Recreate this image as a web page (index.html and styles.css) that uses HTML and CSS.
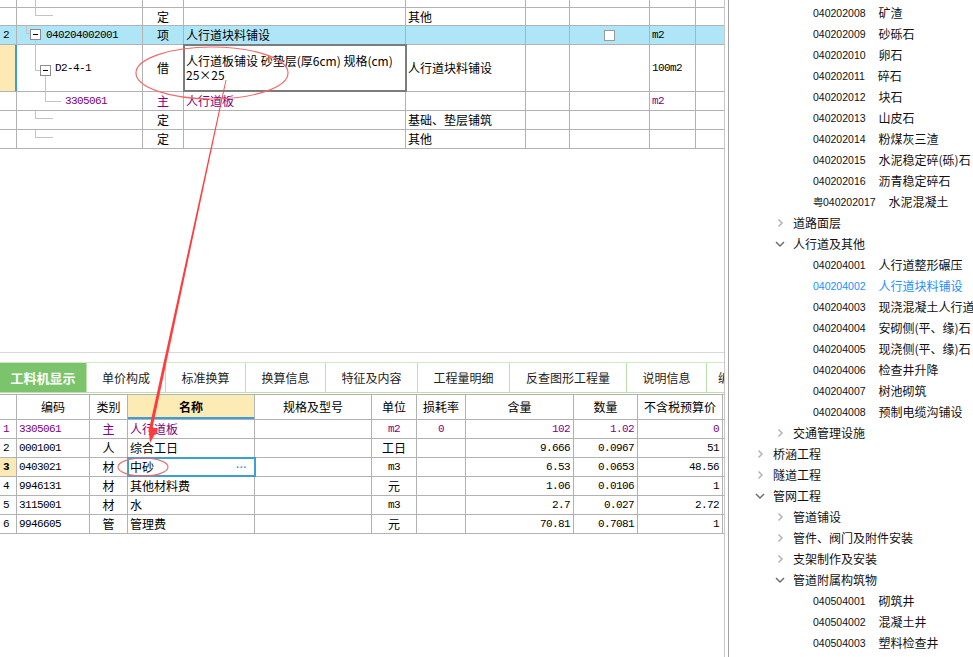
FILE: index.html
```html
<!DOCTYPE html>
<html lang="zh-CN">
<head>
<meta charset="utf-8">
<title>工料机显示</title>
<link rel="stylesheet" href="styles.css">
</head>
<body>
<div class="app">
  <div class="left">
    <div class="grid-top">
      <div class="row h8">
        <div class="c"></div>
        <div class="c code"><i class="ln ln-top"></i></div>
        <div class="c"></div><div class="c"></div><div class="c"></div><div class="c"></div><div class="c"></div><div class="c"></div><div class="c"></div>
      </div>
      <div class="row h18">
        <div class="c"></div>
        <div class="c code"><i class="ln ln-def"></i></div>
        <div class="c ctr">定</div>
        <div class="c"></div>
        <div class="c tx">其他</div>
        <div class="c"></div><div class="c"></div><div class="c"></div><div class="c"></div>
      </div>
      <div class="row h19 blue">
        <div class="c num"><span class="m">2</span></div>
        <div class="c code pl29"><i class="ln ln-root"></i><i class="box box-root"></i><i class="ln ln-root-down"></i><span class="m">040204002001</span></div>
        <div class="c ctr">项</div>
        <div class="c tx">人行道块料铺设</div>
        <div class="c"></div>
        <div class="c"></div>
        <div class="c ctr"><span class="chk"></span></div>
        <div class="c tx"><span class="m">m2</span></div>
        <div class="c"></div>
      </div>
      <div class="row h47">
        <div class="c cur"></div>
        <div class="c code pl38"><i class="ln ln-d2"></i><i class="box box-d2"></i><i class="ln ln-d2-down"></i><span class="m">D2-4-1</span></div>
        <div class="c ctr">借</div>
        <div class="c tx sel">人行道板铺设 砂垫层(厚6cm) 规格(cm)<br>25×25</div>
        <div class="c tx">人行道块料铺设</div>
        <div class="c"></div>
        <div class="c"></div>
        <div class="c tx"><span class="m">100m2</span></div>
        <div class="c"></div>
      </div>
      <div class="row h19 purple">
        <div class="c"></div>
        <div class="c code pl48"><i class="ln ln-sub"></i><span class="m">3305061</span></div>
        <div class="c ctr">主</div>
        <div class="c tx">人行道板</div>
        <div class="c"></div>
        <div class="c"></div>
        <div class="c"></div>
        <div class="c tx"><span class="m">m2</span></div>
        <div class="c"></div>
      </div>
      <div class="row h19">
        <div class="c"></div>
        <div class="c code"><i class="ln ln-def"></i></div>
        <div class="c ctr">定</div>
        <div class="c"></div>
        <div class="c tx">基础、垫层铺筑</div>
        <div class="c"></div><div class="c"></div><div class="c"></div><div class="c"></div>
      </div>
      <div class="row h19">
        <div class="c"></div>
        <div class="c code"><i class="ln ln-def"></i></div>
        <div class="c ctr">定</div>
        <div class="c"></div>
        <div class="c tx">其他</div>
        <div class="c"></div><div class="c"></div><div class="c"></div><div class="c"></div>
      </div>
    </div>

    <div class="mid"></div>

    <div class="bottom">
      <div class="tabs">
        <div class="tab active w87">工料机显示</div>
        <div class="tab w79">单价构成</div>
        <div class="tab w80">标准换算</div>
        <div class="tab w80">换算信息</div>
        <div class="tab w92">特征及内容</div>
        <div class="tab w92">工程量明细</div>
        <div class="tab w117">反查图形工程量</div>
        <div class="tab w80">说明信息</div>
        <div class="tab rest">编</div>
      </div>
      <div class="grid-bot">
        <div class="row hrow">
          <div class="c"></div>
          <div class="c ctr">编码</div>
          <div class="c ctr">类别</div>
          <div class="c ctr namehead">名称</div>
          <div class="c ctr">规格及型号</div>
          <div class="c ctr">单位</div>
          <div class="c ctr">损耗率</div>
          <div class="c ctr">含量</div>
          <div class="c ctr">数量</div>
          <div class="c ctr">不含税预算价</div>
        </div>
        <div class="row drow purple">
          <div class="c num"><span class="m">1</span></div>
          <div class="c tx"><span class="m">3305061</span></div>
          <div class="c ctr">主</div>
          <div class="c tx">人行道板</div>
          <div class="c"></div>
          <div class="c ctr"><span class="m">m2</span></div>
          <div class="c ctr"><span class="m">0</span></div>
          <div class="c rt"><span class="m">102</span></div>
          <div class="c rt"><span class="m">1.02</span></div>
          <div class="c rt"><span class="m">0</span></div>
        </div>
        <div class="row drow">
          <div class="c num"><span class="m">2</span></div>
          <div class="c tx"><span class="m">0001001</span></div>
          <div class="c ctr">人</div>
          <div class="c tx">综合工日</div>
          <div class="c"></div>
          <div class="c ctr">工日</div>
          <div class="c"></div>
          <div class="c rt"><span class="m">9.666</span></div>
          <div class="c rt"><span class="m">0.0967</span></div>
          <div class="c rt"><span class="m">51</span></div>
        </div>
        <div class="row drow">
          <div class="c num curnum"><span class="m">3</span></div>
          <div class="c tx"><span class="m">0403021</span></div>
          <div class="c ctr">材</div>
          <div class="c tx selb">中砂<span class="dots">···</span></div>
          <div class="c"></div>
          <div class="c ctr"><span class="m">m3</span></div>
          <div class="c"></div>
          <div class="c rt"><span class="m">6.53</span></div>
          <div class="c rt"><span class="m">0.0653</span></div>
          <div class="c rt"><span class="m">48.56</span></div>
        </div>
        <div class="row drow">
          <div class="c num"><span class="m">4</span></div>
          <div class="c tx"><span class="m">9946131</span></div>
          <div class="c ctr">材</div>
          <div class="c tx">其他材料费</div>
          <div class="c"></div>
          <div class="c ctr">元</div>
          <div class="c"></div>
          <div class="c rt"><span class="m">1.06</span></div>
          <div class="c rt"><span class="m">0.0106</span></div>
          <div class="c rt"><span class="m">1</span></div>
        </div>
        <div class="row drow">
          <div class="c num"><span class="m">5</span></div>
          <div class="c tx"><span class="m">3115001</span></div>
          <div class="c ctr">材</div>
          <div class="c tx">水</div>
          <div class="c"></div>
          <div class="c ctr"><span class="m">m3</span></div>
          <div class="c"></div>
          <div class="c rt"><span class="m">2.7</span></div>
          <div class="c rt"><span class="m">0.027</span></div>
          <div class="c rt"><span class="m">2.72</span></div>
        </div>
        <div class="row drow">
          <div class="c num"><span class="m">6</span></div>
          <div class="c tx"><span class="m">9946605</span></div>
          <div class="c ctr">管</div>
          <div class="c tx">管理费</div>
          <div class="c"></div>
          <div class="c ctr">元</div>
          <div class="c"></div>
          <div class="c rt"><span class="m">70.81</span></div>
          <div class="c rt"><span class="m">0.7081</span></div>
          <div class="c rt"><span class="m">1</span></div>
        </div>
      </div>
    </div>
  </div>

  <div class="splitter"></div>

  <div class="right">
    <div class="ti l3"><span class="cd">040202008</span><span>矿渣</span></div>
    <div class="ti l3"><span class="cd">040202009</span><span>砂砾石</span></div>
    <div class="ti l3"><span class="cd">040202010</span><span>卵石</span></div>
    <div class="ti l3"><span class="cd">040202011</span><span>碎石</span></div>
    <div class="ti l3"><span class="cd">040202012</span><span>块石</span></div>
    <div class="ti l3"><span class="cd">040202013</span><span>山皮石</span></div>
    <div class="ti l3"><span class="cd">040202014</span><span>粉煤灰三渣</span></div>
    <div class="ti l3"><span class="cd">040202015</span><span>水泥稳定碎(砾)石</span></div>
    <div class="ti l3"><span class="cd">040202016</span><span>沥青稳定碎石</span></div>
    <div class="ti l3"><span class="cd">粤040202017</span><span>水泥混凝土</span></div>
    <div class="ti l2"><svg class="chev" viewBox="0 0 10 10"><polyline class="cr" points="3.5,1.5 7,5 3.5,8.5"/></svg><span>道路面层</span></div>
    <div class="ti l2"><svg class="chev" viewBox="0 0 10 10"><polyline class="cdn" points="1,3 5,7 9,3"/></svg><span>人行道及其他</span></div>
    <div class="ti l3"><span class="cd">040204001</span><span>人行道整形碾压</span></div>
    <div class="ti l3 hi"><span class="cd">040204002</span><span>人行道块料铺设</span></div>
    <div class="ti l3"><span class="cd">040204003</span><span>现浇混凝土人行道及进口坡</span></div>
    <div class="ti l3"><span class="cd">040204004</span><span>安砌侧(平、缘)石</span></div>
    <div class="ti l3"><span class="cd">040204005</span><span>现浇侧(平、缘)石</span></div>
    <div class="ti l3"><span class="cd">040204006</span><span>检查井升降</span></div>
    <div class="ti l3"><span class="cd">040204007</span><span>树池砌筑</span></div>
    <div class="ti l3"><span class="cd">040204008</span><span>预制电缆沟铺设</span></div>
    <div class="ti l2"><svg class="chev" viewBox="0 0 10 10"><polyline class="cr" points="3.5,1.5 7,5 3.5,8.5"/></svg><span>交通管理设施</span></div>
    <div class="ti l1"><svg class="chev" viewBox="0 0 10 10"><polyline class="cr" points="3.5,1.5 7,5 3.5,8.5"/></svg><span>桥涵工程</span></div>
    <div class="ti l1"><svg class="chev" viewBox="0 0 10 10"><polyline class="cr" points="3.5,1.5 7,5 3.5,8.5"/></svg><span>隧道工程</span></div>
    <div class="ti l1"><svg class="chev" viewBox="0 0 10 10"><polyline class="cdn" points="1,3 5,7 9,3"/></svg><span>管网工程</span></div>
    <div class="ti l2"><svg class="chev" viewBox="0 0 10 10"><polyline class="cr" points="3.5,1.5 7,5 3.5,8.5"/></svg><span>管道铺设</span></div>
    <div class="ti l2"><svg class="chev" viewBox="0 0 10 10"><polyline class="cr" points="3.5,1.5 7,5 3.5,8.5"/></svg><span>管件、阀门及附件安装</span></div>
    <div class="ti l2"><svg class="chev" viewBox="0 0 10 10"><polyline class="cr" points="3.5,1.5 7,5 3.5,8.5"/></svg><span>支架制作及安装</span></div>
    <div class="ti l2"><svg class="chev" viewBox="0 0 10 10"><polyline class="cdn" points="1,3 5,7 9,3"/></svg><span>管道附属构筑物</span></div>
    <div class="ti l3"><span class="cd">040504001</span><span>砌筑井</span></div>
    <div class="ti l3"><span class="cd">040504002</span><span>混凝土井</span></div>
    <div class="ti l3"><span class="cd">040504003</span><span>塑料检查井</span></div>
  </div>

  <svg class="annot" width="973" height="657" viewBox="0 0 973 657">
    <ellipse cx="212" cy="73" rx="76" ry="26" fill="none" stroke="#f26a6a" stroke-width="1.2"/>
    <ellipse cx="143" cy="467" rx="25" ry="9" fill="none" stroke="#f26a6a" stroke-width="1.1"/>
    <polygon points="225.6,80 226.4,80 151.6,432 148.4,432" fill="#ff3b3b"/>
    <polygon points="150,443 157.8,428.8 148.4,426.8" fill="#ff3b3b"/>
  </svg>
</div>
</body>
</html>
```
FILE: styles.css
```css
* { box-sizing: border-box; }

body {
  margin: 0;
  font-family: "Noto Sans CJK SC", sans-serif;
  font-size: 12px;
  color: #000;
  background: #fff;
}

.app {
  position: relative;
  display: flex;
  width: 973px;
  height: 657px;
  overflow: hidden;
}

.left {
  width: 724px;
  flex: none;
  display: flex;
  flex-direction: column;
}

.splitter {
  width: 5px;
  flex: none;
  border-left: 1px solid #c8c8c8;
  border-right: 1px solid #a0a0a0;
}

.right {
  flex: 1;
  padding-top: 2px;
  overflow: hidden;
}

/* ---------- grids ---------- */
.row {
  display: grid;
  border-bottom: 1px solid #b2b2b2;
}

.grid-top .row {
  grid-template-columns: 17px 126px 41px 222px 120px 44px 80px 46px 28px;
}

.grid-bot .row {
  grid-template-columns: 17px 73px 38px 127px 117px 45px 49px 108px 64px 85px;
}

.row > .c {
  position: relative;
  display: flex;
  align-items: center;
  border-right: 1px solid #b2b2b2;
  white-space: nowrap;
  line-height: 14px;
  min-width: 0;
}

.grid-top .row > .c:last-child { border-right: none; }

.h8 { height: 8px; }
.h18 { height: 18px; }
.h19 { height: 19px; }
.h47 { height: 47px; }

.blue { background: #aee6f8; }
.purple { color: #800080; }

.ctr { justify-content: center; }
.rt { justify-content: flex-end; padding-right: 3px; }
.tx { padding-left: 2px; }
.num { padding-left: 3px; }
.pl29 { padding-left: 29px; }
.pl38 { padding-left: 38px; }
.pl48 { padding-left: 48px; }

.m {
  font-family: "Liberation Mono", monospace;
  font-size: 11px;
  letter-spacing: -0.6px;
}

.cur {
  background: #fde9b3;
  border-right: 2px solid #3a9fd8 !important;
}

.sel {
  white-space: normal;
  align-items: center;
  outline: 2px solid #7c7c7c;
  outline-offset: -1px;
  z-index: 1;
}

.chk {
  width: 11px;
  height: 11px;
  border: 1px solid #9a9a9a;
  background: #fff;
}

/* tree connectors */
.ln {
  position: absolute;
  border: 0 solid #c4c4c4;
}
.ln-top { left: 18px; top: 0; height: 8px; border-left-width: 1px; }
.ln-def { left: 18px; top: 0; width: 18px; height: 8px; border-left-width: 1px; border-bottom-width: 1px; }
.ln-root { left: 9px; top: 0; width: 4px; height: 8px; border-left-width: 1px; border-bottom-width: 1px; }
.ln-root-down { left: 18px; top: 14px; height: 5px; border-left-width: 1px; }
.ln-d2 { left: 18px; top: 0; width: 5px; height: 26px; border-left-width: 1px; border-bottom-width: 1px; }
.ln-d2-down { left: 28px; top: 31px; height: 16px; border-left-width: 1px; }
.ln-sub { left: 28px; top: 0; width: 16px; height: 10px; border-left-width: 1px; border-bottom-width: 1px; }

.box {
  position: absolute;
  width: 11px;
  height: 11px;
  border: 1px solid #8c8c8c;
  background: #fff;
}
.box::after {
  content: "";
  position: absolute;
  left: 2px;
  top: 4px;
  width: 5px;
  height: 1px;
  background: #000;
}
.box-root { left: 13px; top: 3px; }
.box-d2 { left: 23px; top: 20px; }

/* ---------- middle blank ---------- */
.mid {
  flex: 1;
  border-bottom: 1px solid #d8d8d8;
}

/* ---------- bottom ---------- */
.bottom {
  height: 304px;
  flex: none;
  padding-top: 9px;
}

.tabs {
  display: flex;
  height: 31px;
  border-top: 1px solid #cdeac0;
  border-bottom: 1px solid #b9e1a9;
  overflow: hidden;
}

.tab {
  flex: none;
  display: flex;
  align-items: center;
  justify-content: center;
  border-right: 1px solid #b9e1a9;
  font-size: 12px;
  color: #222;
}
.tab.active {
  background: #7cc46b;
  color: #fff;
  font-weight: bold;
  font-size: 13px;
}
.w79 { width: 79px; }
.w80 { width: 80px; }
.w87 { width: 87px; }
.w92 { width: 92px; }
.w117 { width: 117px; }
.rest { width: 40px; justify-content: flex-start; padding-left: 11px; border-right: none; }

.grid-bot { margin-top: 1px; }

.hrow {
  height: 26px;
  border-top: 1px solid #b2b2b2;
}
.namehead {
  background: #fdebb5;
  font-weight: bold;
  box-shadow: inset 0 -2px 0 #3a9fd8;
}
.drow { height: 19px; }

.curnum {
  background: #fde9b3;
  font-weight: bold;
}
.selb {
  outline: 2px solid #3aa0d8;
  outline-offset: -1px;
  z-index: 1;
  justify-content: space-between;
  padding-right: 7px;
}
.dots {
  color: #4a98d4;
  font-family: "Liberation Sans", sans-serif;
  font-size: 11px;
  font-weight: bold;
  letter-spacing: 0;
}

/* ---------- right tree ---------- */
.ti {
  display: flex;
  align-items: center;
  height: 21px;
  white-space: nowrap;
  color: #111;
}
.l3 { padding-left: 84px; }
.l2 { padding-left: 46px; }
.l1 { padding-left: 26px; }

.cd {
  font-family: "Liberation Sans", sans-serif;
  font-size: 10.5px;
  margin-right: 13px;
}
.hi { color: #1890ff; }

.chev {
  width: 10px;
  height: 10px;
  margin-right: 8px;
  flex: none;
}
.chev polyline {
  fill: none;
  stroke-width: 1.5;
}
.chev .cr { stroke: #b4b4b4; }
.chev .cdn { stroke: #6e6e6e; }

/* ---------- annotations ---------- */
.annot {
  position: absolute;
  left: 0;
  top: 0;
  pointer-events: none;
  z-index: 5;
}
```
